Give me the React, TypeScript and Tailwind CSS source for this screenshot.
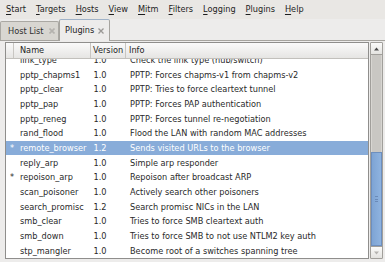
import React from 'react';

type Plugin = {
  name: string;
  version: string;
  info: string;
  active?: boolean;
  selected?: boolean;
};

const PLUGINS: Plugin[] = [
  { name: 'link_type', version: '1.0', info: 'Check the link type (hub/switch)' },
  { name: 'pptp_chapms1', version: '1.0', info: 'PPTP: Forces chapms-v1 from chapms-v2' },
  { name: 'pptp_clear', version: '1.0', info: 'PPTP: Tries to force cleartext tunnel' },
  { name: 'pptp_pap', version: '1.0', info: 'PPTP: Forces PAP authentication' },
  { name: 'pptp_reneg', version: '1.0', info: 'PPTP: Forces tunnel re-negotiation' },
  { name: 'rand_flood', version: '1.0', info: 'Flood the LAN with random MAC addresses' },
  { name: 'remote_browser', version: '1.2', info: 'Sends visited URLs to the browser', active: true, selected: true },
  { name: 'reply_arp', version: '1.0', info: 'Simple arp responder' },
  { name: 'repoison_arp', version: '1.0', info: 'Repoison after broadcast ARP', active: true },
  { name: 'scan_poisoner', version: '1.0', info: 'Actively search other poisoners' },
  { name: 'search_promisc', version: '1.2', info: 'Search promisc NICs in the LAN' },
  { name: 'smb_clear', version: '1.0', info: 'Tries to force SMB cleartext auth' },
  { name: 'smb_down', version: '1.0', info: 'Tries to force SMB to not use NTLM2 key auth' },
  { name: 'stp_mangler', version: '1.0', info: 'Become root of a switches spanning tree' },
];

const MENU = ['Start', 'Targets', 'Hosts', 'View', 'Mitm', 'Filters', 'Logging', 'Plugins', 'Help'];

function CloseIcon({ faint }: { faint?: boolean }) {
  return (
    <svg width="6" height="6" viewBox="0 0 6 6" className="shrink-0">
      <path
        d="M0.5 0.5 L5.5 5.5 M5.5 0.5 L0.5 5.5"
        stroke={faint ? '#b4b2ae' : '#9a9895'}
        strokeWidth={faint ? 1.6 : 1.3}
        fill="none"
      />
    </svg>
  );
}

export default function App() {
  return (
    <div className="w-[385px] h-[262px] overflow-hidden bg-[#edeceb] text-[8.2px] leading-none text-[#1e1e1e] font-['DejaVu_Sans',sans-serif] flex flex-col">
      {/* Menu bar */}
      <div className="h-[19px] flex items-center pl-[1px] bg-[#e9e7e4] shrink-0">
        {MENU.map((m) => (
          <span key={m} className="px-[5px]">
            <span className="underline underline-offset-[1.5px] decoration-[0.8px]">{m[0]}</span>
            {m.slice(1)}
          </span>
        ))}
      </div>

      {/* Tabs */}
      <div className="h-[22px] flex items-end shrink-0 border-b border-[#a6a49f]">
        <div className="h-[19px] w-[59px] flex items-center gap-[5px] pl-[7px] bg-[#d8d6d1] border border-b-0 border-[#aaa8a3] rounded-t-[2px] text-[#303030]">
          Host List
          <CloseIcon faint />
        </div>
        <div className="h-[22px] w-[51px] -mb-px flex items-center gap-[4px] pl-[5px] bg-[#edeceb] border border-b-0 border-[#a6a49f] border-t-[#9fb2c8] rounded-t-[2px]">
          Plugins
          <CloseIcon />
        </div>
      </div>

      {/* Page */}
      <div className="flex-1 min-h-0 flex pl-[5px] pr-[2px] pt-[1px] pb-[3px] gap-[1px]">
        <div className="flex-1 min-h-0 flex flex-col border border-[#8f8e8c] bg-white">
          {/* Header */}
          <div className="h-[16px] shrink-0 flex bg-gradient-to-b from-[#fafafa] to-[#e6e5e3] border-b border-[#c2c0bc]">
            <div className="w-[8px] border-r border-[#c8c6c2]" />
            <div className="w-[77px] flex items-center pl-[6px] border-r border-[#c8c6c2]">Name</div>
            <div className="w-[35px] flex items-center pl-[2px] border-r border-[#c8c6c2]">Version</div>
            <div className="flex-1 flex items-center pl-[3px]">Info</div>
          </div>
          {/* Rows */}
          <div className="flex-1 min-h-0 flex flex-col justify-end overflow-hidden">
            {PLUGINS.map((p) => (
              <div
                key={p.name}
                className={`h-[14.66px] shrink-0 flex items-center ${p.selected ? 'bg-[#88acd9] text-white' : 'text-[#2a2a2a]'}`}
              >
                <div className="w-[14px] pl-[4px]">{p.active ? '*' : ''}</div>
                <div className="w-[73.5px] whitespace-nowrap">{p.name}</div>
                <div className="w-[36.5px]">{p.version}</div>
                <div className="flex-1 whitespace-nowrap">{p.info}</div>
              </div>
            ))}
          </div>
        </div>

        {/* Scrollbar */}
        <div className="w-[13px] min-h-0 flex flex-col border border-[#a19f9b] bg-[#c9c7c3] rounded-[1px]">
          <div className="h-[12px] shrink-0 flex items-center justify-center bg-gradient-to-b from-[#fbfbfa] to-[#e4e3e0] border-b border-[#a19f9b]">
            <svg width="5" height="4" viewBox="0 0 5 4">
              <path d="M0 3.5 L2.5 0.5 L5 3.5 Z" fill="#4a4a4a" />
            </svg>
          </div>
          <div className="h-[97px] shrink-0 border-x border-[#d8d6d2]" />
          <div className="flex-1 min-h-0 flex items-center justify-center bg-gradient-to-r from-[#7ea4d4] to-[#8fb3df] border border-[#6d8fbf]">
            <div className="w-[3px] h-[6px] flex flex-col justify-between">
              <div className="h-px bg-[#6a8ab8]" />
              <div className="h-px bg-[#6a8ab8]" />
              <div className="h-px bg-[#6a8ab8]" />
            </div>
          </div>
          <div className="h-[12px] shrink-0 flex items-center justify-center bg-gradient-to-b from-[#fbfbfa] to-[#e4e3e0] border-t border-[#a19f9b]">
            <svg width="5" height="4" viewBox="0 0 5 4">
              <path d="M0 0.5 L2.5 3.5 L5 0.5 Z" fill="#b5b3b0" />
            </svg>
          </div>
        </div>
      </div>
    </div>
  );
}
